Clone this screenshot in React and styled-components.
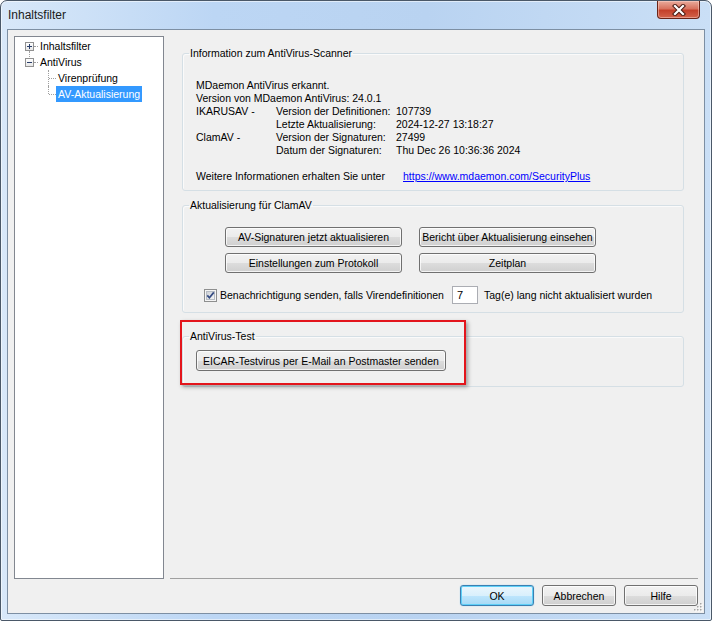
import React from "react";
import styled, { createGlobalStyle } from "styled-components";

const Global = createGlobalStyle`
  html, body { margin: 0; padding: 0; background: #ffffff; }
  body {
    font-family: "Liberation Sans", Arial, sans-serif;
    font-size: 10.5px;
    color: #000;
  }
  #root { width: 712px; height: 621px; }
  * { box-sizing: border-box; }
`;

const Window = styled.div`
  width: 712px;
  height: 621px;
  display: flex;
  flex-direction: column;
  padding: 0 6px 6px;
  border: 1px solid #4a5868;
  border-radius: 7px 7px 2px 2px;
  background: linear-gradient(to right, #d8e8f9 0%, #bcd6f4 30%, #b9d3f1 60%, #cadff6 100%);
  box-shadow: inset 0 0 0 1px rgba(255, 255, 255, 0.55);
  position: relative;
`;

const TitleBar = styled.div`
  height: 28px;
  display: flex;
  justify-content: space-between;
  align-items: flex-start;
`;

const Title = styled.div`
  font-family: "Liberation Sans", Arial, sans-serif;
  font-size: 12px;
  color: #1b1b1b;
  line-height: 14px;
  margin: 7px 0 0 1px;
`;

const CloseButton = styled.div`
  width: 43px;
  height: 18px;
  margin-right: 5px;
  display: flex;
  align-items: center;
  justify-content: center;
  border: 1px solid #6a2418;
  border-top: none;
  border-radius: 0 0 4px 4px;
  background: linear-gradient(#e9ab9c 0%, #d8735f 45%, #c4402a 55%, #d3634b 100%);
  box-shadow: inset 0 0 0 1px rgba(255, 220, 210, 0.45);
`;

const Client = styled.div`
  flex: 1;
  display: flex;
  flex-direction: column;
  padding: 6px 6px 7px;
  border: 1px solid #7d8fa3;
  background: #f0f0f0;
  position: relative;
`;

const Main = styled.div`
  flex: 1;
  display: flex;
  gap: 6px;
  min-height: 0;
`;

const Tree = styled.div`
  width: 150px;
  background: #fff;
  border: 1px solid #828790;
  padding-top: 1px;
`;

const TreeRow = styled.div`
  height: 16px;
  display: flex;
  align-items: center;
  padding-left: ${(p) => p.$indent}px;
`;

const Expander = styled.span`
  width: 9px;
  height: 9px;
  border: 1px solid #919191;
  background: linear-gradient(#ffffff, #e6e6e6);
  position: relative;
  flex: none;
  &::before {
    content: "";
    position: absolute;
    left: 1px;
    top: 3px;
    width: 5px;
    height: 1px;
    background: #2a3e6a;
  }
  &::after {
    content: ${(p) => (p.$open ? "none" : '""')};
    position: absolute;
    left: 3px;
    top: 1px;
    width: 1px;
    height: 5px;
    background: #2a3e6a;
  }
`;

const Stem = styled.span`
  position: absolute;
  left: 3px;
  top: 8px;
  height: 8px;
  border-left: 1px dotted #a0a0a0;
`;

const Dots = styled.span`
  width: 4px;
  border-top: 1px dotted #a0a0a0;
  flex: none;
`;

const Branch = styled.span`
  width: 8px;
  height: 16px;
  position: relative;
  flex: none;
  &::before {
    content: "";
    position: absolute;
    left: 0;
    top: 0;
    height: ${(p) => (p.$last ? "8px" : "16px")};
    border-left: 1px dotted #a0a0a0;
  }
  &::after {
    content: "";
    position: absolute;
    left: 1px;
    top: 8px;
    width: 7px;
    border-top: 1px dotted #a0a0a0;
  }
`;

const TreeLabel = styled.span`
  height: 16px;
  line-height: 16px;
  padding: 0 2px;
  white-space: nowrap;
  background: ${(p) => (p.$selected ? "#3399ff" : "transparent")};
  color: ${(p) => (p.$selected ? "#fff" : "#000")};
`;

const RightColumn = styled.div`
  flex: 1;
  display: flex;
  flex-direction: column;
  padding: 11px 14px 0 12px;
  border-bottom: 1px solid #a0a0a0;
`;

const Group = styled.fieldset`
  margin: ${(p) => p.$mt || 0}px 0 0;
  padding: ${(p) => p.$pad};
  border: 1px solid #d5dfe5;
  border-radius: 3px;
  min-width: 0;
  box-shadow: inset 1px 1px 0 #fafafa;
`;

const Legend = styled.legend`
  padding: 0 1px;
  margin: 0;
  line-height: 13px;
`;

const InfoGrid = styled.div`
  display: grid;
  grid-template-columns: 80px 120px 1fr;
  line-height: 13px;
  margin-left: 7px;
  white-space: nowrap;
`;

const Wide = styled.div`
  grid-column: 1 / -1;
`;

const MoreRow = styled.div`
  display: grid;
  grid-template-columns: 207px 1fr;
  line-height: 13px;
  margin: 13px 0 0 7px;
  white-space: nowrap;
`;

const Link = styled.a`
  color: #0000ff;
  text-decoration: underline;
`;

const ButtonRow = styled.div`
  display: flex;
  gap: 17px;
  margin: ${(p) => p.$mt || 0}px 0 0 ${(p) => p.$ml}px;
`;

const Button = styled.div`
  width: ${(p) => p.$w}px;
  height: ${(p) => p.$h || 20}px;
  display: flex;
  align-items: center;
  justify-content: center;
  white-space: nowrap;
  border: 1px solid ${(p) => (p.$default ? "#3c7fb1" : "#707070")};
  border-radius: 3px;
  background: ${(p) =>
    p.$default
      ? "linear-gradient(#eaf6fd 0%, #d9f0fc 50%, #bee6fd 50%, #a7d9f5 100%)"
      : "linear-gradient(#f2f2f2 0%, #ebebeb 50%, #dddddd 50%, #cfcfcf 100%)"};
  box-shadow: ${(p) =>
    p.$default
      ? "inset 0 0 0 1px #5ed0f8, 0 0 1px #6cc3f0"
      : "inset 0 0 0 1px rgba(255, 255, 255, 0.75)"};
`;

const CheckRow = styled.div`
  display: flex;
  align-items: center;
  height: 18px;
  margin: 13px 0 0 15px;
  white-space: nowrap;
`;

const CheckText = styled.span`
  margin-left: 3px;
`;

const NumBox = styled.div`
  width: 26px;
  height: 18px;
  margin: 0 6px 0 8px;
  padding-left: 4px;
  line-height: 16px;
  background: #fff;
  border: 1px solid #abadb3;
  font-size: 11px;
`;

const TestArea = styled.div`
  position: relative;
  margin-top: 17px;
`;

const Highlight = styled.div`
  position: absolute;
  left: -2px;
  top: -10px;
  width: 286px;
  height: 65px;
  border: 2px solid #e3151c;
  box-shadow: 2px 2px 4px rgba(0, 0, 0, 0.35);
  pointer-events: none;
`;

const Footer = styled.div`
  margin-top: 6px;
  display: flex;
  justify-content: flex-end;
  gap: 8px;
`;

const Grip = styled.svg`
  position: absolute;
  right: 1px;
  bottom: 1px;
`;

function Checkbox() {
  return (
    <svg width="13" height="13" viewBox="0 0 13 13">
      <defs>
        <linearGradient id="cbg" x1="0" y1="0" x2="1" y2="1">
          <stop offset="0" stopColor="#cbcfd5" />
          <stop offset="1" stopColor="#f6f6f6" />
        </linearGradient>
      </defs>
      <rect x="0.5" y="0.5" width="12" height="12" fill="#f4f4f4" stroke="#8e8f8f" />
      <rect x="2.5" y="2.5" width="8" height="8" fill="url(#cbg)" stroke="#b6bcc4" />
      <path d="M3.3 6.4 L5.4 8.8 L9.8 3.4" fill="none" stroke="#334a82" strokeWidth="1.7" />
    </svg>
  );
}

function CloseGlyph() {
  return (
    <svg width="16" height="12" viewBox="0 0 16 12">
      <path d="M4 2 L12 10 M12 2 L4 10" stroke="#4a1b12" strokeWidth="4.2" strokeLinecap="square" fill="none" />
      <path d="M4 2 L12 10 M12 2 L4 10" stroke="#ffffff" strokeWidth="2.2" strokeLinecap="square" fill="none" />
    </svg>
  );
}

const grips = [
  [8, 2], [5, 5], [8, 5], [2, 8], [5, 8], [8, 8],
];

export default function App() {
  return (
    <>
      <Global />
      <Window>
        <TitleBar>
          <Title>Inhaltsfilter</Title>
          <CloseButton>
            <CloseGlyph />
          </CloseButton>
        </TitleBar>
        <Client>
          <Main>
            <Tree>
              <TreeRow $indent={10}>
                <Expander>
                  <Stem />
                </Expander>
                <Dots />
                <TreeLabel>Inhaltsfilter</TreeLabel>
              </TreeRow>
              <TreeRow $indent={10}>
                <Expander $open />
                <Dots />
                <TreeLabel>AntiVirus</TreeLabel>
              </TreeRow>
              <TreeRow $indent={33}>
                <Branch />
                <TreeLabel>Virenprüfung</TreeLabel>
              </TreeRow>
              <TreeRow $indent={33}>
                <Branch $last />
                <TreeLabel $selected>AV-Aktualisierung</TreeLabel>
              </TreeRow>
            </Tree>
            <RightColumn>
              <Group $pad="19px 6px 7px">
                <Legend>Information zum AntiVirus-Scanner</Legend>
                <InfoGrid>
                  <Wide>MDaemon AntiVirus erkannt.</Wide>
                  <Wide>Version von MDaemon AntiVirus: 24.0.1</Wide>
                  <div>IKARUSAV -</div>
                  <div>Version der Definitionen:</div>
                  <div>107739</div>
                  <div />
                  <div>Letzte Aktualisierung:</div>
                  <div>2024-12-27 13:18:27</div>
                  <div>ClamAV -</div>
                  <div>Version der Signaturen:</div>
                  <div>27499</div>
                  <div />
                  <div>Datum der Signaturen:</div>
                  <div>Thu Dec 26 10:36:36 2024</div>
                </InfoGrid>
                <MoreRow>
                  <span>Weitere Informationen erhalten Sie unter</span>
                  <span>
                    <Link>https://www.mdaemon.com/SecurityPlus</Link>
                  </span>
                </MoreRow>
              </Group>

              <Group $mt={8} $pad="15px 6px 8px">
                <Legend>Aktualisierung für ClamAV</Legend>
                <ButtonRow $ml={36}>
                  <Button $w={177}>AV-Signaturen jetzt aktualisieren</Button>
                  <Button $w={177}>Bericht über Aktualisierung einsehen</Button>
                </ButtonRow>
                <ButtonRow $ml={36} $mt={6}>
                  <Button $w={177}>Einstellungen zum Protokoll</Button>
                  <Button $w={177}>Zeitplan</Button>
                </ButtonRow>
                <CheckRow>
                  <Checkbox />
                  <CheckText>Benachrichtigung senden, falls Virendefinitionen</CheckText>
                  <NumBox>7</NumBox>
                  <span>Tag(e) lang nicht aktualisiert wurden</span>
                </CheckRow>
              </Group>

              <TestArea>
                <Group $pad="7px 6px 15px">
                  <Legend>AntiVirus-Test</Legend>
                  <ButtonRow $ml={7}>
                    <Button $w={250} $h={21}>
                      EICAR-Testvirus per E-Mail an Postmaster senden
                    </Button>
                  </ButtonRow>
                </Group>
                <Highlight />
              </TestArea>
            </RightColumn>
          </Main>
          <Footer>
            <Button $w={74} $h={21} $default>
              OK
            </Button>
            <Button $w={74} $h={21}>
              Abbrechen
            </Button>
            <Button $w={74} $h={21}>
              Hilfe
            </Button>
          </Footer>
          <Grip width="11" height="11" viewBox="0 0 11 11">
            {grips.map(([x, y], i) => (
              <g key={i}>
                <rect x={x + 1} y={y + 1} width="1.5" height="1.5" fill="#ffffff" />
                <rect x={x} y={y} width="1.5" height="1.5" fill="#a5a5a5" />
              </g>
            ))}
          </Grip>
        </Client>
      </Window>
    </>
  );
}
